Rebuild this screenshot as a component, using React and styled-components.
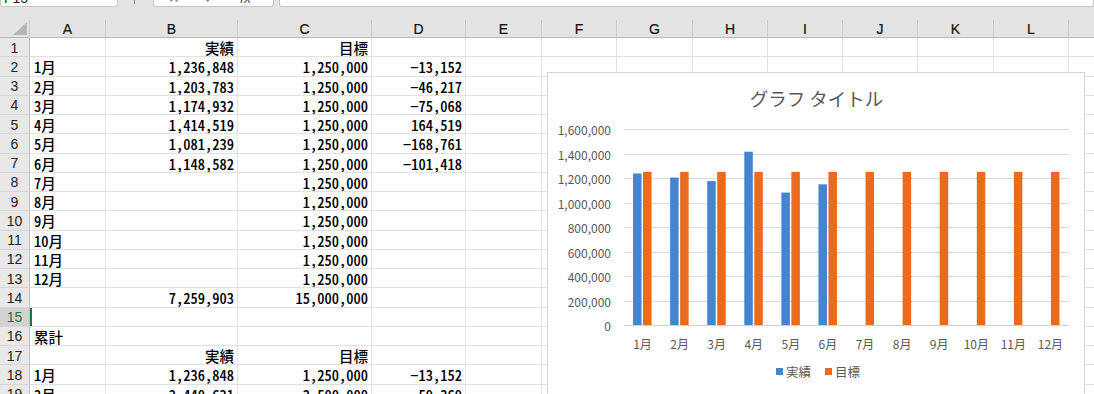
import React from 'react';
import styled, { createGlobalStyle } from 'styled-components';

const GlobalStyle = createGlobalStyle`
  html, body {
    margin: 0;
    padding: 0;
    background: #ffffff;
  }
  body {
    font-family: "Noto Sans CJK JP", "DejaVu Sans", sans-serif;
  }
`;

const COLS = [30, 76, 132, 134, 94, 76, 75, 76, 75, 75, 75, 76, 75, 75];
const LETTERS = ['A', 'B', 'C', 'D', 'E', 'F', 'G', 'H', 'I', 'J', 'K', 'L', 'M'];

const ROWS = [
  ['', '実績', '目標', ''],
  ['1月', '1,236,848', '1,250,000', '−13,152'],
  ['2月', '1,203,783', '1,250,000', '−46,217'],
  ['3月', '1,174,932', '1,250,000', '−75,068'],
  ['4月', '1,414,519', '1,250,000', '164,519'],
  ['5月', '1,081,239', '1,250,000', '−168,761'],
  ['6月', '1,148,582', '1,250,000', '−101,418'],
  ['7月', '', '1,250,000', ''],
  ['8月', '', '1,250,000', ''],
  ['9月', '', '1,250,000', ''],
  ['10月', '', '1,250,000', ''],
  ['11月', '', '1,250,000', ''],
  ['12月', '', '1,250,000', ''],
  ['', '7,259,903', '15,000,000', ''],
  ['', '', '', ''],
  ['累計', '', '', ''],
  ['', '実績', '目標', ''],
  ['1月', '1,236,848', '1,250,000', '−13,152'],
  ['2月', '2,440,631', '2,500,000', '−59,369'],
];

const ACTIVE_ROW = 15;

const ACTUAL = [1236848, 1203783, 1174932, 1414519, 1081239, 1148582];
const TARGET = 1250000;
const MONTHS = ['1月', '2月', '3月', '4月', '5月', '6月', '7月', '8月', '9月', '10月', '11月', '12月'];

const BLUE = '#4784cf';
const ORANGE = '#ea6a1e';

const Sheet = styled.div`
  position: relative;
  width: 1094px;
  height: 394px;
  overflow: hidden;
  background: #ffffff;
`;

const FormulaStrip = styled.div`
  display: flex;
  align-items: flex-start;
  height: 20px;
  background: #e4e4e4;
`;

const FieldBox = styled.div`
  box-sizing: border-box;
  width: ${p => (p.$w ? `${p.$w}px` : 'auto')};
  flex: ${p => (p.$w ? 'none' : '1')};
  margin-left: ${p => p.$ml || 0}px;
  height: 7px;
  overflow: hidden;
  background: #ffffff;
  border: 1px solid #c6c6c6;
  border-top: none;
  border-radius: 0 0 3px 3px;
  display: flex;
  gap: ${p => p.$gap || 0}px;
  padding-left: ${p => p.$pl || 2}px;
`;

const FieldText = styled.span`
  font-family: "Liberation Sans", sans-serif;
  font-size: 14px;
  line-height: 14px;
  margin-top: -9px;
  color: ${p => p.$c || '#222'};
  font-style: ${p => (p.$italic ? 'italic' : 'normal')};
`;

const Divider = styled.span`
  width: 1px;
  height: 4px;
  margin-left: 16px;
  background: #8a8a8a;
`;

const Grid = styled.div`
  display: grid;
  grid-template-columns: ${COLS.map(w => `${w}px`).join(' ')};
  grid-template-rows: 18px;
  grid-auto-rows: 19.25px;
`;

const Corner = styled.div`
  box-sizing: border-box;
  background: #e4e4e4;
  border-right: 1px solid #cbcbcb;
  border-bottom: 1px solid #b9b9b9;
  display: flex;
  align-items: flex-end;
  justify-content: flex-end;
  padding: 0 2px 2px 0;
`;

const CornerMark = styled.div`
  width: 14px;
  height: 13px;
  background: #b6b6b6;
  clip-path: polygon(100% 0, 100% 100%, 0 100%);
`;

const ColHead = styled.div`
  box-sizing: border-box;
  background: #e4e4e4;
  border-right: 1px solid #cbcbcb;
  border-bottom: 1px solid #b9b9b9;
  display: flex;
  align-items: center;
  justify-content: center;
  font-family: "Liberation Sans", sans-serif;
  font-size: 14px;
  color: #111;
  padding-top: 1px;
  -webkit-text-stroke: 0.2px #111;
`;

const RowHead = styled.div`
  box-sizing: border-box;
  background: ${p => (p.$active ? '#d2d2d2' : '#e8e8e8')};
  border-right: 1px solid #bdbdbd;
  border-bottom: 1px solid #d6d6d6;
  display: flex;
  align-items: center;
  justify-content: center;
  font-family: "Liberation Sans", sans-serif;
  font-size: 14px;
  color: ${p => (p.$active ? '#217346' : '#222')};
  padding-top: 1px;
`;

const Cell = styled.div`
  box-sizing: border-box;
  border-right: 1px solid #e1e1e1;
  border-bottom: 1px solid #e1e1e1;
  display: flex;
  align-items: center;
  justify-content: ${p => (p.$right ? 'flex-end' : 'flex-start')};
  padding: 1px 3px 0 4px;
  font-size: 14.5px;
  font-weight: 500;
  font-feature-settings: "hwid";
  color: #000;
  white-space: nowrap;
  overflow: hidden;
  box-shadow: ${p => (p.$active ? 'inset 2px 0 0 #217346' : 'none')};
`;

const ChartBox = styled.div`
  position: absolute;
  left: 547px;
  top: 72px;
  width: 538px;
  height: 340px;
  box-sizing: border-box;
  background: #ffffff;
  border: 1px solid #d4d4d4;
  display: flex;
  flex-direction: column;
`;

const ChartTitle = styled.div`
  height: 50px;
  line-height: 50px;
  text-align: center;
  font-size: 18.5px;
  color: #595959;
  padding-left: 1px;
`;

const Legend = styled.div`
  height: 32px;
  display: flex;
  align-items: center;
  justify-content: center;
  gap: 14px;
  padding-left: 4px;
`;

const LegendItem = styled.div`
  display: flex;
  align-items: center;
  gap: 3px;
  font-size: 12.5px;
  color: #595959;
`;

const Swatch = styled.span`
  width: 7px;
  height: 7px;
  background: ${p => p.$color};
`;

function BarChart() {
  const x0 = 76;
  const x1 = 521;
  const top = 6;
  const step = 24.5;
  const zero = top + step * 8;
  const catW = (x1 - x0) / 12;
  const yOf = v => zero - (v / 1600000) * (step * 8);
  const ticks = [0, 1, 2, 3, 4, 5, 6, 7, 8];

  return (
    <svg width="536" height="232" style={{ display: 'block' }}>
      {ticks.map(t => {
        const y = Math.round(zero - t * step) + 0.5;
        return (
          <g key={t}>
            <line x1={x0} x2={x1} y1={y} y2={y} stroke={t === 0 ? '#cfcfcf' : '#d9d9d9'} strokeWidth="1" />
            <text
              x="63"
              y={y}
              textAnchor="end"
              dominantBaseline="central"
              fontSize="12"
              fill="#595959"
              fontFamily='"Noto Sans CJK JP", sans-serif'
            >
              {t === 0 ? '0' : (t * 200000).toLocaleString('en-US')}
            </text>
          </g>
        );
      })}
      {MONTHS.map((m, i) => {
        const cx = x0 + catW * (i + 0.5);
        const a = ACTUAL[i];
        return (
          <g key={m}>
            {a !== undefined && (
              <rect x={cx - 9.5} y={yOf(a)} width="8.5" height={zero - yOf(a)} fill={BLUE} />
            )}
            <rect x={cx + 0.5} y={yOf(TARGET)} width="8.5" height={zero - yOf(TARGET)} fill={ORANGE} />
            <text
              x={cx}
              y={zero + 18}
              textAnchor="middle"
              dominantBaseline="central"
              fontSize="12"
              fill="#595959"
              fontFamily='"Noto Sans CJK JP", sans-serif'
            >
              {m}
            </text>
          </g>
        );
      })}
    </svg>
  );
}

export default function App() {
  return (
    <Sheet>
      <GlobalStyle />
      <FormulaStrip>
        <FieldBox $w={118} $pl={3}>
          <FieldText>F15</FieldText>
        </FieldBox>
        <Divider />
        <FieldBox $w={121} $ml={18} $pl={14} $gap={24}>
          <FieldText $c="#888">✕</FieldText>
          <FieldText $c="#888">✓</FieldText>
          <FieldText $c="#555" $italic>fx</FieldText>
        </FieldBox>
        <FieldBox $ml={5} />
      </FormulaStrip>
      <Grid>
        <Corner>
          <CornerMark />
        </Corner>
        {LETTERS.map(l => (
          <ColHead key={l}>{l}</ColHead>
        ))}
        {ROWS.map((row, r) => {
          const n = r + 1;
          const active = n === ACTIVE_ROW;
          return (
            <React.Fragment key={n}>
              <RowHead $active={active}>{n}</RowHead>
              <Cell $active={active}>{row[0]}</Cell>
              <Cell $right>{row[1]}</Cell>
              <Cell $right>{row[2]}</Cell>
              <Cell $right>{row[3]}</Cell>
              {LETTERS.slice(4).map(l => (
                <Cell key={l} />
              ))}
            </React.Fragment>
          );
        })}
      </Grid>
      <ChartBox>
        <ChartTitle>グラフ タイトル</ChartTitle>
        <BarChart />
        <Legend>
          <LegendItem>
            <Swatch $color={BLUE} />
            実績
          </LegendItem>
          <LegendItem>
            <Swatch $color={ORANGE} />
            目標
          </LegendItem>
        </Legend>
      </ChartBox>
    </Sheet>
  );
}
